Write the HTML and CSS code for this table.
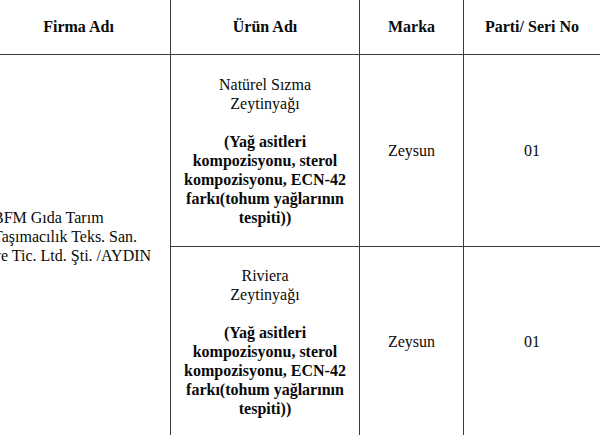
FILE: index.html
```html
<!DOCTYPE html>
<html lang="tr">
<head>
<meta charset="utf-8">
<link rel="stylesheet" href="styles.css">
</head>
<body>
<table class="grid">
  <colgroup>
    <col class="c1"><col class="c2"><col class="c3"><col class="c4">
  </colgroup>
  <thead>
    <tr class="head">
      <th>Firma Adı</th>
      <th>Ürün Adı</th>
      <th>Marka</th>
      <th>Parti/ Seri No</th>
    </tr>
  </thead>
  <tbody>
    <tr class="r1">
      <td class="firm" rowspan="2">BFM Gıda Tarım<br>Taşımacılık Teks. San.<br>ve Tic. Ltd. Şti. /AYDIN<br>&nbsp;</td>
      <td class="product">
        <p class="pname">Natürel Sızma<br>Zeytinyağı</p>
        <p class="tests">(Yağ asitleri<br>kompozisyonu, sterol<br>kompozisyonu, ECN-42<br>farkı(tohum yağlarının<br>tespiti))</p>
      </td>
      <td>Zeysun</td>
      <td>01</td>
    </tr>
    <tr class="r2">
      <td class="product">
        <p class="pname">Riviera<br>Zeytinyağı</p>
        <p class="tests">(Yağ asitleri<br>kompozisyonu, sterol<br>kompozisyonu, ECN-42<br>farkı(tohum yağlarının<br>tespiti))</p>
      </td>
      <td>Zeysun</td>
      <td>01</td>
    </tr>
  </tbody>
</table>
</body>
</html>
```
FILE: styles.css
```css
html, body {
  margin: 0;
  padding: 0;
  background: #ffffff;
  overflow: hidden;
}
body {
  font-family: "Liberation Serif", "Times New Roman", Tinos, "DejaVu Serif", serif;
  font-size: 16px;
  line-height: 19px;
  color: #0a0a0a;
}
.grid {
  border-collapse: collapse;
  table-layout: fixed;
  width: 614px;
  margin-left: -14px;
  margin-top: -2px;
}
.c1 { width: 184px; }
.c2 { width: 189px; }
.c3 { width: 104px; }
.c4 { width: 137px; }
.grid th,
.grid td {
  border: 1px solid #3c3c3c;
  padding: 0 7px;
  text-align: center;
  vertical-align: middle;
}
.grid th {
  font-weight: bold;
}
.head th {
  height: 55px;
}
.r1 td {
  height: 191px;
}
.r2 td {
  height: 189px;
}
.grid td.firm {
  text-align: left;
  padding-left: 6px;
}
.pname {
  margin: 0;
}
.tests {
  margin: 19px 0 0;
  font-weight: bold;
}
```
